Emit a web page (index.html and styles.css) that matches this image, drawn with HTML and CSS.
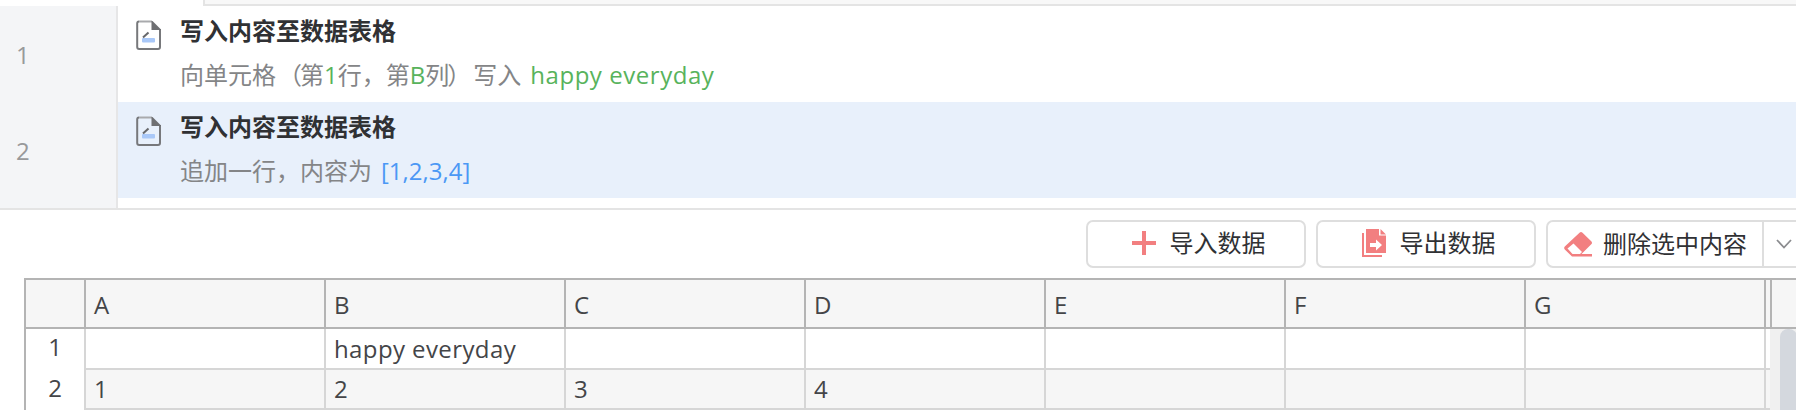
FILE: index.html
```html
<!DOCTYPE html>
<html lang="zh-CN">
<head>
<meta charset="utf-8">
<title>数据表格</title>
<link rel="stylesheet" href="styles.css">
</head>
<body>
<svg class="defs" width="0" height="0">
  <symbol id="doc" viewBox="0 0 25 30">
    <path d="M3 1.500H16" stroke="#a9aaad" stroke-width="2" fill="none"/>
    <path d="M3 1.500Q1.200 1.500 1.200 3.500V27Q1.200 29 3.200 29H22Q24 29 24 27V9" stroke="#77787b" stroke-width="2" fill="none"/>
    <path d="M15.500 1V10H25V9.500L16.500 1Z" fill="#6e6f72"/>
    <rect x="6" y="18" width="13" height="4.500" rx="1" fill="#a9c8f8"/>
    <path d="M7 17.500L12.500 12.500" stroke="#66676a" stroke-width="2"/>
  </symbol>
</svg>
<div class="tabs"><div class="tab-active"></div><div class="tab-rest"></div></div>
<section class="steps">
  <div class="gutter"><div>1</div><div>2</div></div>
  <div class="list">
    <div class="step">
      <svg class="doc"><use href="#doc"/></svg>
      <div class="body">
        <div class="title">写入内容至数据表格</div>
        <div class="desc">向单元格<span class="open">（</span>第<b class="green">1</b>行，第<b class="green">B</b>列<span class="close">）</span>写入<b class="green phrase">happy everyday</b></div>
      </div>
    </div>
    <div class="step selected">
      <svg class="doc"><use href="#doc"/></svg>
      <div class="body">
        <div class="title">写入内容至数据表格</div>
        <div class="desc">追加一行，内容为<b class="blue">[1,2,3,4]</b></div>
      </div>
    </div>
  </div>
</section>
<div class="toolbar">
  <div class="btn">
    <svg class="ic-plus" viewBox="0 0 24 24"><path d="M12 0V24M0 12H24" stroke="#f27f80" stroke-width="4"/></svg>
    <span>导入数据</span>
  </div>
  <div class="btn">
    <svg class="ic-export" viewBox="0 0 24 28"><path d="M4 0H17V6.500H24V24H4Z" fill="#f27f80"/><path d="M18.500 0L24 5.500H18.500Z" fill="#f27f80"/><path d="M1 4V27H20" stroke="#f27f80" stroke-width="2" fill="none"/><path d="M8 14H14V10.500L20 16L14 21.500V18H8Z" fill="#fff"/></svg>
    <span>导出数据</span>
  </div>
  <div class="btn split">
    <div class="main">
      <svg class="ic-erase" viewBox="0 0 28 25"><path d="M15.500 .7Q17 -.5 18.500 .7L27.500 9.500Q28.500 11 27.500 12L17.500 22H28V24.500H8L.8 17.500Q-.5 16 .8 14.500Z" fill="#f27f80"/><path d="M9.500 11.500L18 20L16 22H8.500L3.500 16.500Z" fill="#fff"/></svg>
      <span>删除选中内容</span>
    </div>
    <div class="more"><svg viewBox="0 0 16 10"><path d="M1 1L8 8.500L15 1" stroke="#8b8c8f" stroke-width="1.800" fill="none"/></svg></div>
  </div>
</div>
<div class="grid">
  <div class="row head"><div class="num"></div><div>A</div><div>B</div><div>C</div><div>D</div><div>E</div><div>F</div><div>G</div><div class="gap"></div><div class="end"></div></div>
  <div class="content">
    <div class="rows">
      <div class="row first"><div class="num">1</div><div></div><div class="phrase">happy everyday</div><div></div><div></div><div></div><div></div><div></div><div class="gap"></div></div>
      <div class="row even"><div class="num">2</div><div>1</div><div>2</div><div>3</div><div>4</div><div></div><div></div><div></div><div class="gap"></div></div>
    </div>
    <div class="track"><div class="thumb"></div></div>
  </div>
</div>
</body>
</html>
```
FILE: styles.css
```css
* { box-sizing: border-box; }
body { margin: 0; width: 1796px; height: 410px; overflow: hidden; background: #fff; font: 24px/32px "Open Sans", "Noto Sans CJK SC", sans-serif; color: #444548; }
.defs { position: absolute; }
.tabs { display: flex; height: 6px; }
.tab-active { width: 203px; }
.tab-rest { flex: 1; background: #f8f8f8; border-left: 2px solid #e4e4e4; border-bottom: 2px solid #e4e4e4; }
.steps { display: flex; height: 204px; border-bottom: 2px solid #e4e4e4; }
.gutter { width: 118px; background: #f4f5f7; border-right: 2px solid #e6e6e7; color: #98999b; }
.gutter div { height: 96px; line-height: 97px; padding-left: 16px; }
.list { flex: 1; }
.step { display: flex; height: 96px; padding: 14px 0 0 17.5px; }
.selected { background: #e8f0fb; }
.doc { width: 25px; height: 30px; }
.body { margin-left: 19.5px; }
.title { margin-top: -5px; font-weight: 700; color: #303134; white-space: nowrap; }
.desc { margin-top: 12px; color: #848587; white-space: nowrap; }
.desc b { font-weight: 400; }
.open { margin: 0 -2px 0 2px; }
.close { margin: 0 2px 0 -2px; }
.desc .green { color: #58b35c; }
.desc .blue { color: #4b98f5; margin-left: 9px; }
.desc .phrase { margin-left: 9px; letter-spacing: .55px; }
.phrase { letter-spacing: .4px; }
.toolbar { display: flex; gap: 10px; height: 68px; padding: 10px 0 0 1086px; color: #303134; }
.btn { flex: none; display: flex; align-items: center; justify-content: center; width: 220px; height: 48px; border: 2px solid #dedede; border-radius: 7px; padding-left: 5px; white-space: nowrap; }
.btn > span { margin-top: -2px; }
.ic-plus { width: 24px; height: 24px; margin: -3px 14px 0 0; }
.ic-export { width: 24px; height: 28px; margin: -3px 14px 0 0; }
.split { width: 270px; padding-left: 0; justify-content: flex-start; }
.main { display: flex; align-items: center; width: 214px; padding-left: 16px; }
.ic-erase { width: 28px; height: 25px; margin-right: 11px; }
.more { height: 44px; border-left: 2px solid #dedede; padding-left: 12px; display: flex; align-items: center; }
.more svg { width: 16px; height: 10px; }
.grid { width: 1772px; margin-left: 24px; border-left: 2px solid #b4b4b4; }
.row { display: grid; grid-template-columns: 60px repeat(7, 240px) 6px 1fr; height: 40px; }
.row > div { border-right: 2px solid #d6d6d6; border-bottom: 2px solid #d6d6d6; padding-left: 8px; line-height: 38px; white-space: nowrap; }
.row.head { height: 51px; border-top: 2px solid #b4b4b4; background: #f6f6f6; }
.row.first { height: 41px; }
.row.first > div { line-height: 39px; }
.row.head > div { border-color: #b4b4b4; padding-top: 2px; line-height: 45px; }
.row.head .end { border-right: 0; }
.content { display: flex; }
.rows { width: 1744px; }
.row > .gap { padding: 0; }
.rows .row > .num { border-bottom: 0; padding: 0; text-align: center; line-height: 35px; }
.rows .row > .gap { border-right: 0; }
.even > div:not(.num) { background: #f6f6f6; }
.track { flex: 1; background: #f0f0f0; padding-left: 10px; }
.thumb { width: 17px; height: 100px; border-radius: 8px; background: #d4d8de; }
```
